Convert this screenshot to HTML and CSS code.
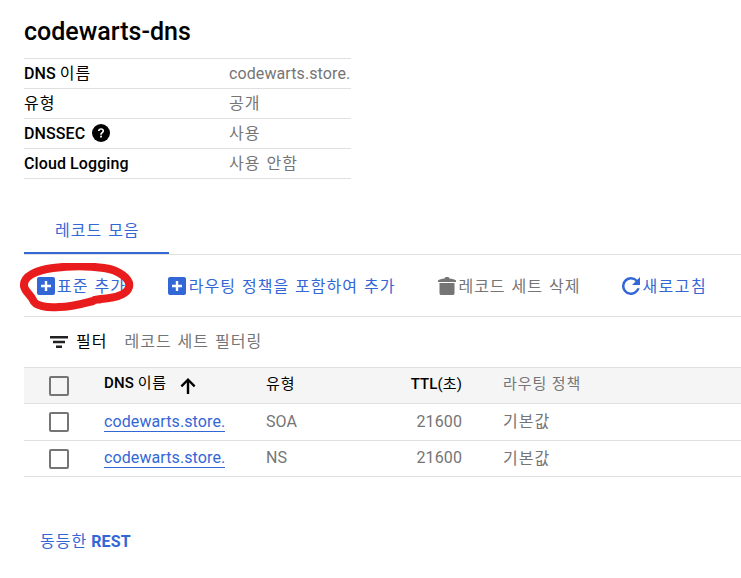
FILE: index.html
```html
<!DOCTYPE html>
<html lang="ko">
<head>
    <meta charset="UTF-8">
    <title>codewarts-dns</title>
    <link rel="stylesheet" href="styles.css">
</head>
<body>
    <div class="page">
        <h1 class="title">codewarts-dns</h1>

        <!-- Zone details -->
        <div class="details">
            <div class="detail-row"><div class="detail-label"><b>DNS</b> <span class="ko">이름</span></div><div class="detail-value">codewarts.store.</div></div>
            <div class="detail-row"><div class="detail-label"><span class="ko">유형</span></div><div class="detail-value ko">공개</div></div>
            <div class="detail-row">
                <div class="detail-label"><b>DNSSEC</b>
                    <svg class="help" viewBox="0 0 18 18"><circle cx="9" cy="9" r="9" fill="#000"/><path d="M5.9 7.1C6 5.3 7.3 4.2 9.1 4.2c1.8 0 3 1.1 3 2.6 0 1.2-.7 1.8-1.4 2.4-.6.5-.9.8-.9 1.6H8.2c0-1.3.5-1.9 1.2-2.5.6-.5 1-.8 1-1.4 0-.7-.5-1.2-1.3-1.2-.8 0-1.4.5-1.5 1.4z" fill="#fff"/><rect x="8.1" y="11.7" width="1.8" height="1.8" fill="#fff"/></svg>
                </div>
                <div class="detail-value ko">사용</div>
            </div>
            <div class="detail-row"><div class="detail-label"><b>Cloud Logging</b></div><div class="detail-value ko">사용 안함</div></div>
        </div>

        <div class="tabs"><div class="tab ko">레코드 모음</div></div>

        <!-- Toolbar -->
        <div class="toolbar">
            <a class="action action-first">
                <svg class="icon" viewBox="0 0 18 18"><rect width="18" height="18" rx="2" fill="#3367d6"/><path d="M7.800 4h2.400v3.800H14v2.400h-3.800V14H7.800v-3.800H4V7.800h3.800z" fill="#fff"/></svg><span class="ko">표준 추가</span>
            </a>
            <a class="action action-routing">
                <svg class="icon" viewBox="0 0 18 18"><rect width="18" height="18" rx="2" fill="#3367d6"/><path d="M7.800 4h2.400v3.800H14v2.400h-3.800V14H7.800v-3.800H4V7.800h3.800z" fill="#fff"/></svg><span class="ko">라우팅 정책을 포함하여 추가</span>
            </a>
            <a class="action action-delete">
                <svg class="icon" viewBox="0 0 18 18"><path d="M0 3.500C1 2.500 4 1.800 6.500 1.600L7.500 0h3l1 1.600C14 1.800 17 2.500 18 3.500V5H0zM1.500 6h15v10.200c0 1-.8 1.800-1.800 1.800H3.300c-1 0-1.800-.8-1.800-1.800z" fill="#757575"/></svg><span class="ko">레코드 세트 삭제</span>
            </a>
            <a class="action action-refresh">
                <svg class="icon" viewBox="0 0 18 18"><path d="M15.300 2.700A8.900 8.900 0 0 0 9 0a9 9 0 1 0 8.700 11.300h-2.600A6.500 6.500 0 1 1 9 2.500c1.800 0 3.300.7 4.500 1.900L10 7.900h8V0z" fill="#3367d6"/></svg><span class="ko">새로고침</span>
            </a>
        </div>

        <!-- Filter -->
        <div class="filter">
            <svg class="filter-icon" viewBox="0 0 18 12"><path d="M0 0h18v2.400H0zM3 4.800h12v2.400H3zM6 9.600h6V12H6z" fill="#212121"/></svg>
            <span class="filter-label ko">필터</span>
            <span class="filter-hint ko">레코드 세트 필터링</span>
        </div>

        <!-- Records -->
        <table class="records">
            <thead>
                <tr>
                    <th class="col-check"><span class="checkbox"></span></th>
                    <th class="col-name"><b>DNS</b> <span class="ko-head">이름</span>
                        <svg class="sort" viewBox="0 0 16 16"><path d="M6.800 16V4.600L2.200 9.200.5 7.500 8 0l7.500 7.500-1.700 1.700-4.600-4.600V16z" fill="#000"/></svg>
                    </th>
                    <th class="col-type"><span class="ko-head">유형</span></th>
                    <th class="col-ttl"><b>TTL</b>(초)</th>
                    <th class="col-policy"><span class="ko-head">라우팅 정책</span></th>
                </tr>
            </thead>
            <tbody>
                <tr>
                    <td class="col-check"><span class="checkbox"></span></td>
                    <td class="col-name"><a class="record-link">codewarts.store.</a></td>
                    <td class="col-type">SOA</td>
                    <td class="col-ttl">21600</td>
                    <td class="col-policy ko">기본값</td>
                </tr>
                <tr>
                    <td class="col-check"><span class="checkbox"></span></td>
                    <td class="col-name"><a class="record-link">codewarts.store.</a></td>
                    <td class="col-type">NS</td>
                    <td class="col-ttl">21600</td>
                    <td class="col-policy ko">기본값</td>
                </tr>
            </tbody>
        </table>

        <div class="rest"><span class="ko">동등한</span> <b>REST</b></div>
    </div>

    <!-- Hand-drawn circle on top of the screenshot -->
    <svg class="scribble" viewBox="0 0 120 52"><path d="M34 5C50 3 70 3 85 5c15 2 27 11 25 19-2 8-15 11-28 12-4 1-6 0-8 2-8 2-20 6-34 6-12 1-24-1-26-7C12 32 6 29 5 23 4 13 18 7 34 5z" fill="none" stroke="#e81c1c" stroke-width="8" stroke-linejoin="round"/></svg>
</body>
</html>
```

FILE: styles.css
```css
* {
    margin: 0;
    padding: 0;
    box-sizing: border-box;
}

body {
    font-family: Roboto, "Noto Sans CJK KR", sans-serif;
    font-size: 16px;
    letter-spacing: 0.1px;
    color: #212121;
    background: white;
    overflow: hidden;
}

b {
    font-weight: 500;
}

.ko {
    letter-spacing: 1px;
    word-spacing: 1px;
}

.page {
    position: relative;
    height: 578px;
    padding: 18px 0 0 24px;
}

.title {
    font-size: 25px;
    font-weight: 500;
    line-height: 28px;
    letter-spacing: 0;
    color: #000;
    margin-bottom: 12px;
}

.details {
    width: 327px;
    border-top: 1px solid #e0e0e0;
}

.detail-row {
    display: flex;
    align-items: center;
    height: 30px;
    padding-bottom: 1px;
    border-bottom: 1px solid #e0e0e0;
}

.detail-row .ko {
    margin-bottom: 2px;
}

.detail-label {
    display: flex;
    align-items: center;
    gap: 4px;
    width: 205px;
    color: #000;
}

.detail-value {
    color: #757575;
    white-space: nowrap;
}

.help {
    width: 18px;
    height: 18px;
    margin-left: 3px;
}

.tabs {
    margin-top: 35px;
    height: 41px;
    border-bottom: 1px solid #e0e0e0;
}

.tab {
    width: 145px;
    height: 40px;
    padding-left: 31px;
    line-height: 34px;
    color: #3367d6;
    border-bottom: 2px solid #3367d6;
}

.toolbar {
    display: flex;
    align-items: center;
    height: 62px;
    padding-left: 13px;
    border-bottom: 1px solid #e0e0e0;
}

.action {
    display: flex;
    align-items: center;
    gap: 3px;
    color: #3367d6;
    white-space: nowrap;
}

.action .ko {
    margin-bottom: 2px;
}

.action-first {
    gap: 2px;
}

.action-routing {
    margin-left: 42px;
}

.action-delete {
    margin-left: 43px;
    gap: 2px;
    color: #757575;
}

.action-refresh {
    margin-left: 42px;
    gap: 2px;
}

.action-refresh .ko {
    letter-spacing: 1.5px;
}

.icon {
    width: 18px;
    height: 18px;
}

.filter {
    display: flex;
    align-items: center;
    height: 50px;
    padding-left: 26px;
}

.filter-icon {
    width: 18px;
    height: 12px;
    margin-right: 8px;
}

.filter .ko {
    margin-bottom: 4px;
}

.filter-label {
    color: #000;
    margin-right: 17px;
}

.filter-hint {
    color: #757575;
}

.records {
    width: 717px;
    border-collapse: collapse;
    border-top: 1px solid #e0e0e0;
    table-layout: fixed;
}

.records th {
    height: 36px;
    padding-bottom: 7px;
    background: #f5f5f5;
    font-size: 15px;
    font-weight: 400;
    text-align: left;
    color: #000;
}

.ko-head {
    letter-spacing: 0.9px;
}

.records td {
    height: 37px;
    padding-bottom: 2px;
    color: #757575;
}

.records td.ko {
    padding-bottom: 4px;
}

.records tbody tr:last-child td {
    height: 36px;
}

.records tr {
    border-bottom: 1px solid #e0e0e0;
}

.col-check {
    width: 80px;
    padding-left: 25px;
}

.records th.col-check {
    padding-bottom: 0;
}

.records td.col-check {
    padding-bottom: 0;
}

.col-name {
    width: 162px;
}

.col-type {
    width: 100px;
}

.col-ttl {
    width: 96px;
    text-align: right;
}

.records th.col-ttl {
    text-align: right;
}

.records th.col-policy {
    color: #757575;
}

.col-policy {
    padding-left: 41px;
}

.checkbox {
    display: block;
    width: 20px;
    height: 20px;
    border: 2px solid #757575;
    border-radius: 2px;
}

.sort {
    width: 16px;
    height: 16px;
    margin-left: 9px;
    vertical-align: -6px;
}

.record-link {
    color: #3367d6;
    border-bottom: 1px solid #3367d6;
}

.rest {
    margin: 51px 0 0 16px;
    color: #3367d6;
}

.rest b {
    font-weight: 700;
}

.scribble {
    position: absolute;
    left: 19px;
    top: 263px;
    width: 120px;
    height: 52px;
}
```
